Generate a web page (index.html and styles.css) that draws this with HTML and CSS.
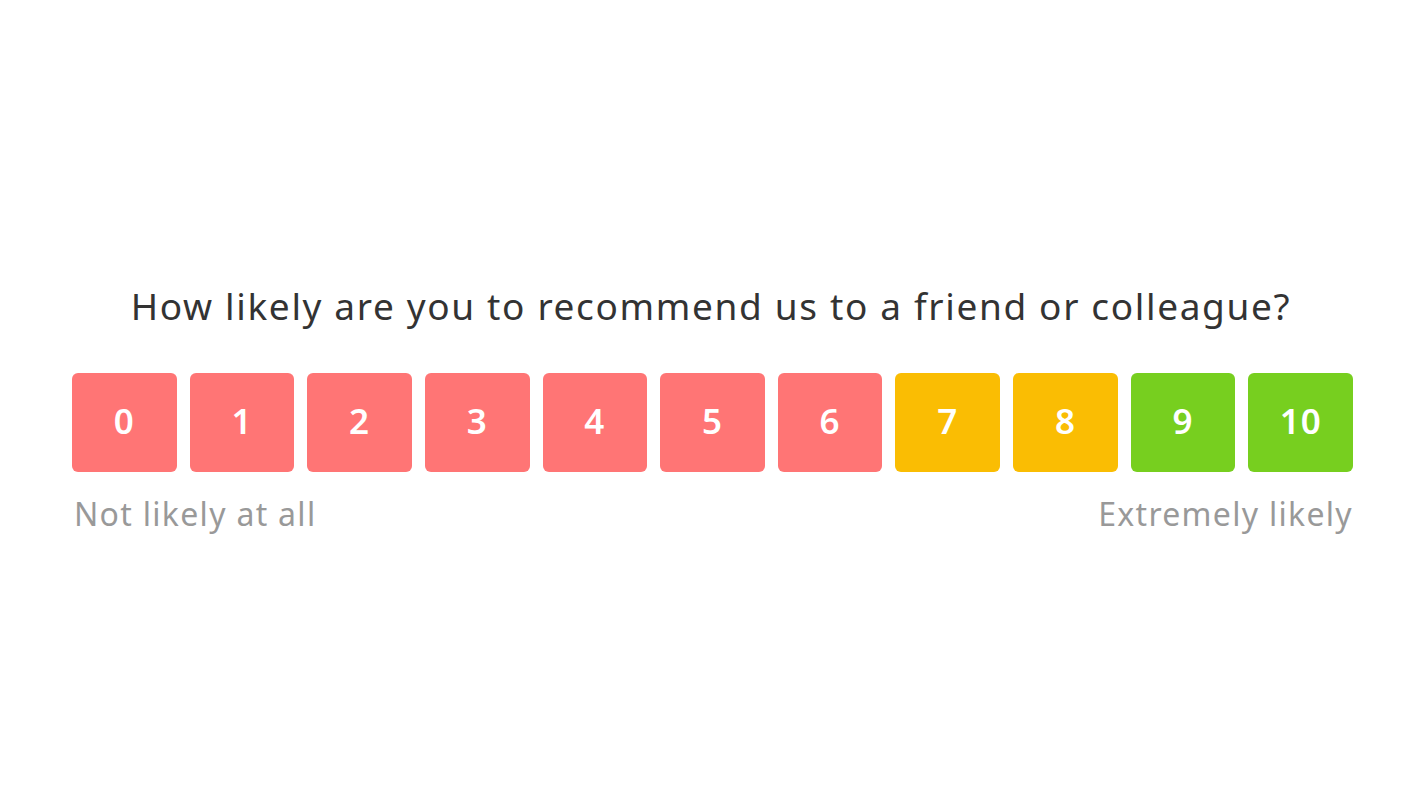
FILE: index.html
```html
<!DOCTYPE html>
<html lang="en">
<head>
    <meta charset="UTF-8">
    <meta name="viewport" content="width=device-width, initial-scale=1.0">
    <title>NPS Survey</title>
    <link rel="stylesheet" href="styles.css">
</head>
<body>
    <main class="survey">
        <h1 class="question">How likely are you to recommend us to a friend or colleague?</h1>

        <div class="scale">
            <button class="score low">0</button>
            <button class="score low">1</button>
            <button class="score low">2</button>
            <button class="score low">3</button>
            <button class="score low">4</button>
            <button class="score low">5</button>
            <button class="score low">6</button>
            <button class="score mid">7</button>
            <button class="score mid">8</button>
            <button class="score high">9</button>
            <button class="score high">10</button>
        </div>

        <div class="labels">
            <span>Not likely at all</span>
            <span>Extremely likely</span>
        </div>
    </main>
</body>
</html>
```

FILE: styles.css
```css
* {
    margin: 0;
    padding: 0;
    box-sizing: border-box;
}

body {
    font-family: "Noto Sans", Arial, sans-serif;
    background: #fff;
    height: 100vh;
    display: flex;
    justify-content: center;
    align-items: center;
}

.survey {
    width: 1281px;
    margin-top: 18px;
    margin-left: 3px;
}

.question {
    text-align: center;
    font-size: 37px;
    font-weight: 400;
    color: #333;
    letter-spacing: 1.65px;
    line-height: 44px;
    margin-left: -3px;
}

/* Score buttons */
.scale {
    display: grid;
    grid-template-columns: repeat(11, 1fr);
    gap: 13px;
    margin-top: 45px;
}

.score {
    height: 99px;
    border: none;
    border-radius: 6px;
    color: #fff;
    font-family: inherit;
    font-size: 35px;
    font-weight: 600;
    letter-spacing: 1px;
    padding-bottom: 4px;
    cursor: pointer;
}

.score.low { background: #ff7575; }
.score.mid { background: #fabd03; }
.score.high { background: #77cf1f; }

.labels {
    display: flex;
    justify-content: space-between;
    margin-top: 20px;
    padding-left: 2px;
    font-size: 32px;
    color: #999;
    letter-spacing: 1.3px;
}
```
